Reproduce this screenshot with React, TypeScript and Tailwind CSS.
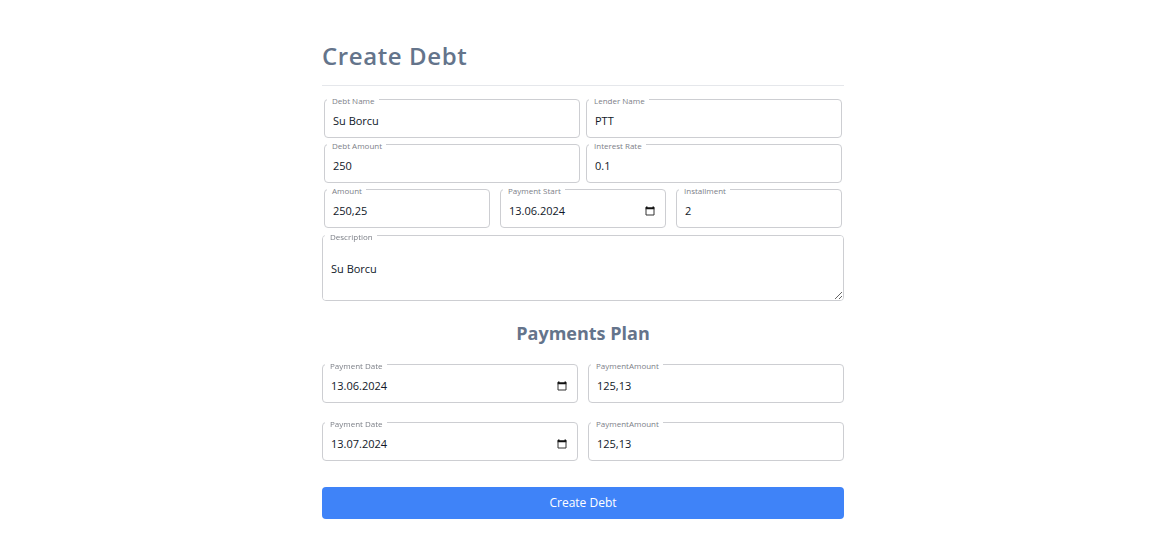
import { useId } from "react";

const frame =
  "block w-full rounded border border-[#cdced2] bg-white text-[11px] leading-4 text-gray-900 outline-none focus:border-blue-500";

const labelStyle =
  "absolute left-[3px] -top-[3px] bg-white pr-1 pl-[5px] text-[8px] leading-[10px] text-[#7d8088]";

function CalendarIcon() {
  return (
    <svg width="10" height="10" viewBox="0 0 10 10" aria-hidden="true">
      <path d="M1 .5h1.500v.7h5V.5H9V1h.5v2.200H.5V1H1z" fill="#111" />
      <path d="M1 2.500v6.500h8V2.500" fill="none" stroke="#333" strokeWidth="1" strokeLinejoin="round" />
    </svg>
  );
}

function Field({ label, value, date = false }: { label: string; value: string; date?: boolean }) {
  const id = useId();
  return (
    <div className="relative flex-1">
      <input id={id} type="text" defaultValue={value} className={`${frame} h-[39px] px-2 pt-1`} />
      <label htmlFor={id} className={labelStyle}>
        {label}
      </label>
      {date && (
        <button type="button" aria-label="Choose date" className="absolute top-[17px] right-[11px]">
          <CalendarIcon />
        </button>
      )}
    </div>
  );
}

function Description({ value }: { value: string }) {
  const id = useId();
  return (
    <div className="relative mt-[7px]">
      <textarea id={id} defaultValue={value} className={`${frame} h-[66px] resize-y px-2 py-[25px]`} />
      <label htmlFor={id} className={labelStyle}>
        Description
      </label>
    </div>
  );
}

const payments = [
  { date: "13.06.2024", amount: "125,13" },
  { date: "13.07.2024", amount: "125,13" },
];

export default function App() {
  return (
    <main className="bg-white pt-10 pb-7 pl-[9px] font-['Open_Sans','Noto_Sans',sans-serif]">
      <form className="mx-auto max-w-[522px]" onSubmit={(e) => e.preventDefault()}>
        <h1 className="border-b border-gray-200 pb-[13px] text-2xl font-semibold tracking-wide text-[#64748b]">
          Create Debt
        </h1>
        <div className="mt-[13px] flex flex-col gap-[6px] px-[2px]">
          <div className="flex gap-[6px]">
            <Field label="Debt Name" value="Su Borcu" />
            <Field label="Lender Name" value="PTT" />
          </div>
          <div className="flex gap-[6px]">
            <Field label="Debt Amount" value="250" />
            <Field label="Interest Rate" value="0.1" />
          </div>
          <div className="flex gap-[10px]">
            <Field label="Amount" value="250,25" />
            <Field label="Payment Start" value="13.06.2024" date />
            <Field label="Installment" value="2" />
          </div>
        </div>
        <Description value="Su Borcu" />
        <h2 className="mt-[18px] text-center text-lg font-bold text-[#64748b]">Payments Plan</h2>
        <div className="mt-[17px] flex flex-col gap-[19px]">
          {payments.map((p) => (
            <div key={p.date} className="flex gap-[10px]">
              <Field label="Payment Date" value={p.date} date />
              <Field label="PaymentAmount" value={p.amount} />
            </div>
          ))}
        </div>
        <button
          type="submit"
          className="mt-[26px] h-8 w-full rounded bg-[#3f83f8] text-xs text-white hover:bg-blue-600"
        >
          Create Debt
        </button>
      </form>
    </main>
  );
}
